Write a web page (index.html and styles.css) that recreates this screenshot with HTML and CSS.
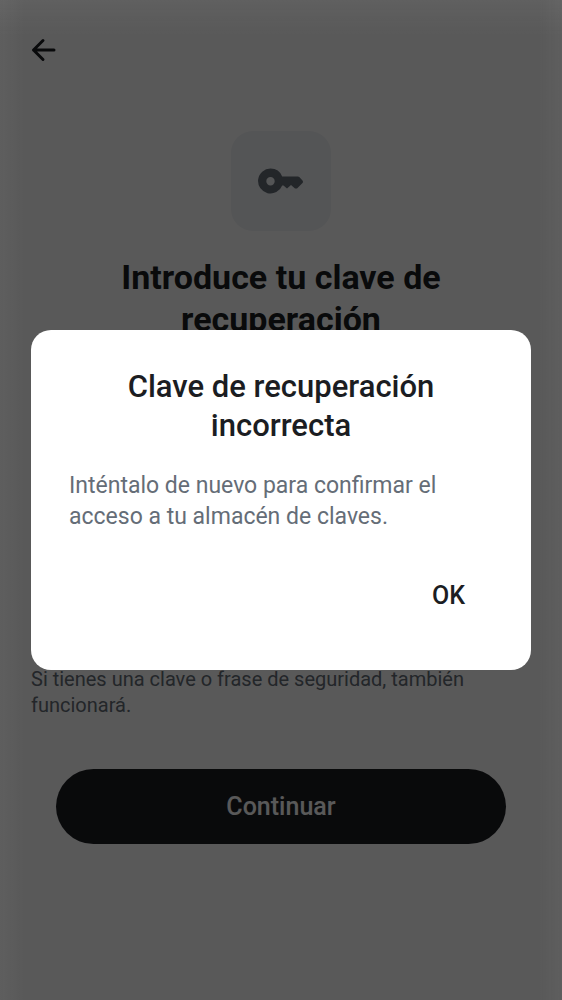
FILE: index.html
```html
<!DOCTYPE html>
<html lang="es">
<head>
<meta charset="utf-8">
<meta name="viewport" content="width=device-width, initial-scale=1">
<title>Clave de recuperación</title>
<link rel="stylesheet" href="styles.css">
</head>
<body>
<main class="screen">
  <header class="topbar">
    <button class="back" type="button" aria-label="Atrás">
      <svg viewBox="0 0 26 26" fill="none" stroke="currentColor" stroke-width="3" stroke-linecap="round" stroke-linejoin="round" aria-hidden="true"><path d="M12 3.500 2.500 13l9.500 9.500M2.500 13H23"/></svg>
    </button>
  </header>
  <div class="tile">
    <svg viewBox="0 0 46 26" fill="currentColor" aria-hidden="true"><path fill-rule="evenodd" d="M12.500 0.500a12.500 12.500 0 1 0 11.700 17H25.500l3.500 3 4-3.500 4 3.500h2l5.500-5.500a2 2 0 0 0 0-2.500l-3.200-3.500a2 2 0 0 0-1.500-.500H24.200A12.500 12.500 0 0 0 12.500.5ZM12.500 9a4.200 4.200 0 1 1 0 8.400 4.200 4.200 0 0 1 0-8.400Z"/></svg>
  </div>
  <h1 class="heading">Introduce tu clave de recuperación</h1>
  <p class="hint">Si tienes una clave o frase de seguridad, también funcionará.</p>
  <button class="primary" type="button">Continuar</button>
</main>
<div class="scrim">
  <section class="dialog" role="alertdialog" aria-modal="true" aria-labelledby="dialog-title" aria-describedby="dialog-text">
    <h2 class="dialog-title" id="dialog-title">Clave de recuperación incorrecta</h2>
    <p class="dialog-text" id="dialog-text">Inténtalo de nuevo para confirmar el acceso a tu almacén de claves.</p>
    <div class="actions"><button class="ok" type="button">OK</button></div>
  </section>
</div>
</body>
</html>
```

FILE: styles.css
```css
* { box-sizing: border-box; }
body {
  margin: 0;
  background: #fff;
  color: #1b1d22;
  font-family: Roboto, "Liberation Sans", sans-serif;
}
h1, h2, p { margin: 0; }
button {
  border: 0;
  font: inherit;
  color: inherit;
  background: none;
  cursor: pointer;
}
.screen {
  display: flex;
  flex-direction: column;
  min-height: 100vh;
  padding: 31px 31px 0;
}
.topbar { display: flex; }
.back { padding: 6px 0; }
.back svg { display: block; width: 26px; height: 26px; }
.tile {
  display: grid;
  place-items: center;
  align-self: center;
  width: 100px;
  height: 100px;
  margin-top: 62px;
  border-radius: 22px;
  background: #f0f2f5;
  color: #656d77;
}
.tile svg { width: 46px; height: 26px; }
.heading {
  margin-top: 25px;
  padding: 0 50px;
  font-size: 34px;
  font-weight: 700;
  line-height: 42px;
  text-align: center;
}
.hint {
  margin-top: 326px;
  color: #656d77;
  font-size: 20px;
  line-height: 26px;
}
.primary {
  height: 75px;
  margin: 51px 25px 0;
  border-radius: 38px;
  background: #1b1d22;
  color: #fff;
  font-size: 25px;
  font-weight: 500;
}
.scrim {
  position: fixed;
  inset: 0;
  display: flex;
  align-items: center;
  padding: 31px;
  background:
    linear-gradient(to bottom, rgba(255, 255, 255, 0.04), transparent 36px),
    linear-gradient(to right, rgba(255, 255, 255, 0.03), transparent 24px),
    linear-gradient(to left, rgba(255, 255, 255, 0.03), transparent 24px),
    rgba(0, 0, 0, 0.65);
}
.dialog {
  width: 100%;
  padding: 37px 38px 44px;
  border-radius: 20px;
  background: #fff;
}
.dialog-title {
  padding: 0 40px;
  font-size: 31px;
  font-weight: 500;
  line-height: 39px;
  text-align: center;
}
.dialog-text {
  margin-top: 25px;
  color: #656d77;
  font-size: 23px;
  line-height: 31px;
}
.actions {
  display: flex;
  justify-content: flex-end;
  margin-top: 32px;
}
.ok {
  height: 62px;
  padding: 0 28px;
  font-size: 25px;
  font-weight: 500;
}
```
